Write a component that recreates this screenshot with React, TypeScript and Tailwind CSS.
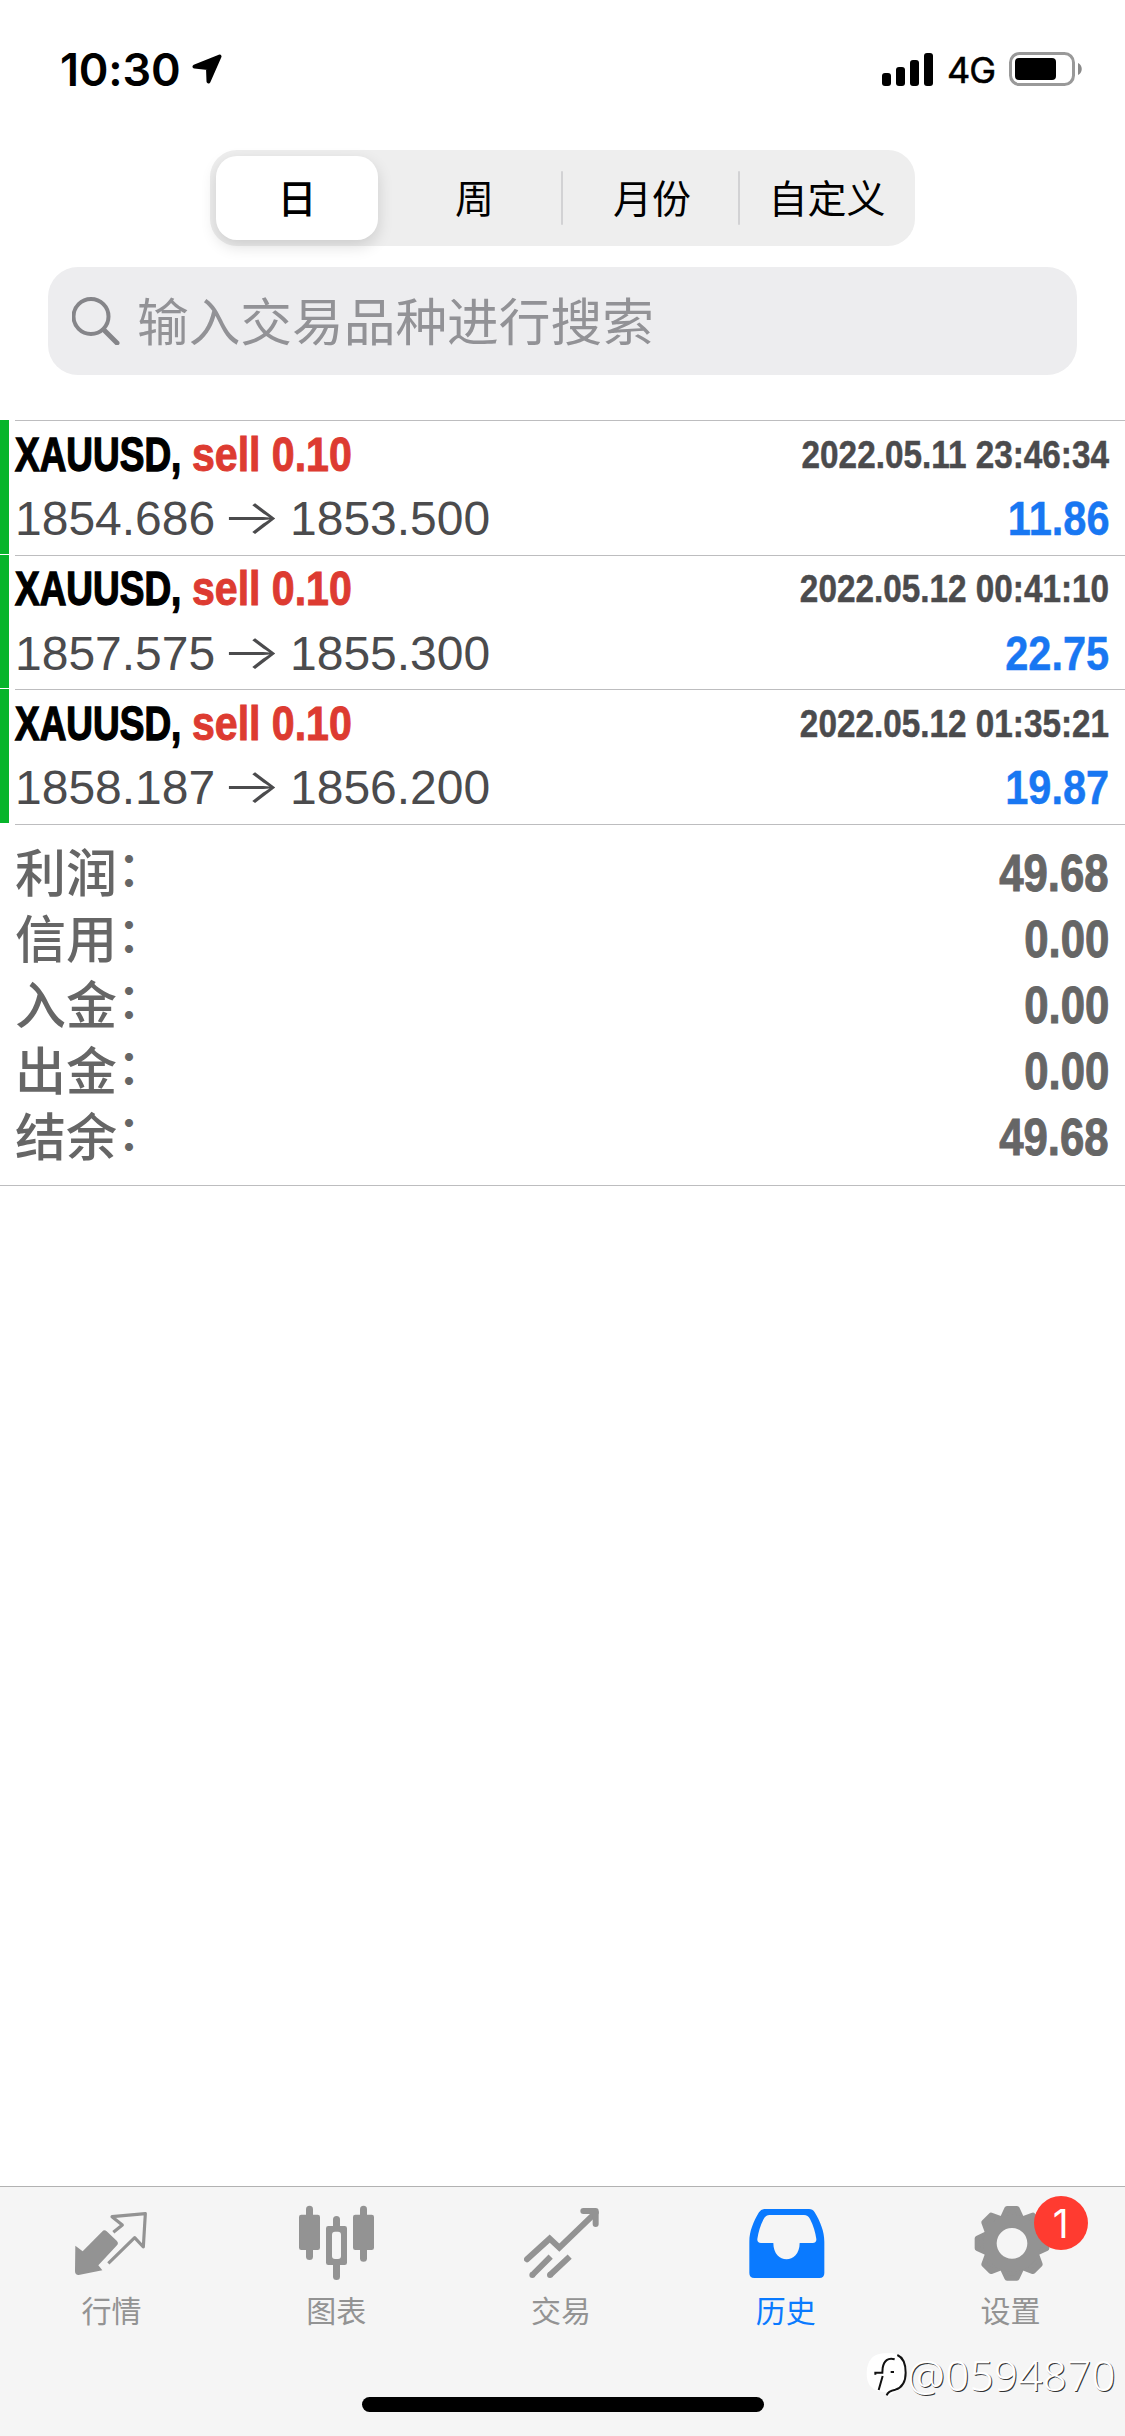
import React, { useState } from 'react';
import clsx from 'clsx';

interface Deal {
  id: number;
  symbol: string;
  side: string;
  volume: string;
  open: string;
  close: string;
  time: string;
  profit: string;
}

const deals: Deal[] = [
  { id: 1, symbol: 'XAUUSD', side: 'sell', volume: '0.10', open: '1854.686', close: '1853.500', time: '2022.05.11 23:46:34', profit: '11.86' },
  { id: 2, symbol: 'XAUUSD', side: 'sell', volume: '0.10', open: '1857.575', close: '1855.300', time: '2022.05.12 00:41:10', profit: '22.75' },
  { id: 3, symbol: 'XAUUSD', side: 'sell', volume: '0.10', open: '1858.187', close: '1856.200', time: '2022.05.12 01:35:21', profit: '19.87' },
];

const totals = [
  { label: '利润', value: '49.68' },
  { label: '信用', value: '0.00' },
  { label: '入金', value: '0.00' },
  { label: '出金', value: '0.00' },
  { label: '结余', value: '49.68' },
];

const periods = ['日', '周', '月份', '自定义'];

const StatusBar: React.FC = () => (
  <div className="flex h-[150px] items-start justify-between pl-[60px] pr-[43px] pt-[41px]">
    <div className="flex h-14 items-center">
      <span className="w-[132px] font-['Inter',sans-serif] text-[45px] font-semibold leading-none tracking-[-0.2px]">10:30</span>
      <svg width="30" height="30" viewBox="0 0 30 30">
        <path d="M2.5 12.5 27.5 2.5 16.5 27.5 16 14Z" fill="#000" stroke="#000" strokeWidth="4" strokeLinejoin="round" />
      </svg>
    </div>
    <div className="flex h-14 items-center">
      <svg width="51" height="33" viewBox="0 0 51 33">
        <rect x="0" y="20" width="9" height="13" rx="3" />
        <rect x="14" y="14" width="9" height="19" rx="3" />
        <rect x="28" y="7" width="9" height="26" rx="3" />
        <rect x="42" y="0" width="9" height="33" rx="3" />
      </svg>
      <span className="ml-[14px] w-[62px] pt-0.5 font-['Inter',sans-serif] text-[36px] leading-none tracking-[-1px] [-webkit-text-stroke:0.5px]">4G</span>
      <svg width="73" height="34" viewBox="0 0 73 34">
        <rect x="1.5" y="1.5" width="63" height="31" rx="9" fill="none" stroke="#999" strokeWidth="3" />
        <rect x="6" y="6" width="41" height="22" rx="4" />
        <path d="M69 11c5 2 5 10 0 12z" fill="#8a8a8a" />
      </svg>
    </div>
  </div>
);

const MarketIcon: React.FC = () => (
  <svg width="76" height="76" viewBox="222 105 228 228">
    <path
      d="M226 227 248 244 306 185Q313 177 320 184L350 212Q357 219 351 226L295 286 307 301 236 315Q225 315 225 304Z"
      fill="currentColor"
    />
    <path d="M340 187 367 165 336 140 436 131 430 231 404 203 325 280" fill="none" stroke="currentColor" strokeWidth="9.5" strokeLinejoin="round" />
  </svg>
);

const ChartIcon: React.FC = () => (
  <svg width="76" height="76" viewBox="897 105 228 228">
    <g fill="currentColor">
      <rect x="897" y="134" width="63" height="106" rx="7" />
      <rect x="918" y="107" width="21" height="163" rx="10.5" />
      <rect x="1059" y="134" width="63" height="106" rx="7" />
      <rect x="1080" y="107" width="21" height="168" rx="10.5" />
      <rect x="999" y="138" width="21" height="60" rx="10.5" />
      <rect x="999" y="260" width="21" height="70" rx="10.5" />
      <rect x="978" y="168" width="63" height="117" rx="7" />
    </g>
    <rect x="996" y="185" width="27" height="82" rx="9" fill="#f5f5f5" />
  </svg>
);

const TradeIcon: React.FC = () => (
  <svg width="76" height="76" viewBox="222 105 228 228">
    <g fill="none" stroke="currentColor" strokeWidth="18">
      <path d="M231 268 299 206 328 233 437 128" strokeLinejoin="miter" strokeLinecap="round" />
      <path d="M400 123H437V162" strokeLinejoin="round" strokeLinecap="round" />
      <path d="M247 315 302 260M300 315 359 260" />
      <path d="M247 315h.1M300 315h.1" strokeLinecap="round" />
    </g>
  </svg>
);

const HistoryIcon: React.FC = () => (
  <svg width="76" height="76" viewBox="896 105 228 228">
    <path
      fill="currentColor"
      fillRule="evenodd"
      d="M943 117H1076Q1087 117 1093 127C1110 155 1122 185 1122 215V309Q1122 324 1107 324H912Q897 324 897 309V215C897 185 909 155 926 127Q932 117 943 117ZM958 135Q946 135 940 147Q926 174 921 207Q920 219 932 219H969C969 284 1048 284 1048 219H1087Q1099 219 1098 207Q1093 174 1079 147Q1073 135 1061 135Z"
    />
  </svg>
);

const SettingsIcon: React.FC = () => (
  <svg width="76" height="76" viewBox="-114 -115 228 228">
    <g fill="currentColor" stroke="currentColor" strokeWidth="16" strokeLinejoin="round">
      {[0, 45, 90, 135, 180, 225, 270, 315].map((angle) => (
        <path key={angle} d="M-15 -104H15L28 -76H-28Z" transform={`rotate(${angle})`} />
      ))}
    </g>
    <circle r="66" fill="none" stroke="currentColor" strokeWidth="40" />
  </svg>
);

const tabs = [
  { label: '行情', icon: MarketIcon },
  { label: '图表', icon: ChartIcon },
  { label: '交易', icon: TradeIcon },
  { label: '历史', icon: HistoryIcon },
  { label: '设置', icon: SettingsIcon, badge: '1' },
];

const DealRow: React.FC<{ deal: Deal }> = ({ deal }) => (
  <div className="flex h-[134.67px]">
    <div className="mb-px w-[9px] shrink-0 bg-[#07b52b]" />
    <div className="ml-1.5 flex-1 border-t border-[#bdbdbf] pr-4 font-['Liberation_Sans',sans-serif] text-[48px] text-[#4b4b4d]">
      <div className="flex h-[66px] items-center justify-between pt-px leading-[66px]">
        <div className="flex font-bold">
          <span className="w-[177px] origin-left scale-x-[0.77] whitespace-nowrap text-black [-webkit-text-stroke:1.4px]">{deal.symbol},</span>
          <span className="w-[160px] origin-left scale-x-[0.855] whitespace-nowrap text-[#dd3b31] [-webkit-text-stroke:1px]">
            {deal.side} {deal.volume}
          </span>
        </div>
        <span className="origin-right scale-x-[0.854] whitespace-nowrap text-[39px] font-bold [-webkit-text-stroke:0.5px]">{deal.time}</span>
      </div>
      <div className="flex h-[63px] items-center justify-between leading-[63px]">
        <div className="flex">
          <span className="w-[206px]">{deal.open}</span>
          <span className="-mt-0.5 w-[69px] origin-left scale-x-[1.32] font-['Inter',sans-serif] font-light">→</span>
          <span>{deal.close}</span>
        </div>
        <span className="origin-right scale-x-[0.865] font-bold text-[#1877f2] [-webkit-text-stroke:0.5px]">{deal.profit}</span>
      </div>
    </div>
  </div>
);

const App: React.FC = () => {
  const [period, setPeriod] = useState('日');
  const [activeTab, setActiveTab] = useState('历史');

  return (
    <div className="flex h-[2436px] w-[1125px] flex-col overflow-hidden bg-white font-['Noto_Sans_CJK_SC',sans-serif] text-black">
      <StatusBar />

      {/* Period switch */}
      <div className="mx-auto grid h-24 w-[705px] grid-cols-[174px_175px_177px_167px] rounded-[27px] bg-[#eeeeee] p-1.5">
        {periods.map((name, i) => (
          <button
            key={name}
            onClick={() => setPeriod(name)}
            className={clsx(
              'relative flex items-center justify-center pb-[3px] text-[39px] leading-none',
              period === name ? 'mr-3 rounded-[21px] bg-white font-medium shadow-[0_6px_16px_rgba(0,0,0,0.14)]' : 'font-normal',
              i === 1 && 'pr-1.5',
              i === 2 && 'pr-[3px]',
              i === 3 && 'pl-[3px]'
            )}
          >
            {i > 1 && <span className="absolute -left-1 top-[15px] h-[54px] w-0.5 rounded bg-[#d2d2d4]" />}
            <span className="whitespace-nowrap">{name}</span>
          </button>
        ))}
      </div>

      {/* Search */}
      <div className="mx-12 mt-[21px] flex h-[108px] items-center rounded-[30px] bg-[#ededef] pl-6">
        <svg width="48" height="48" viewBox="0 0 48 48" fill="none" stroke="#858589" strokeLinecap="round">
          <circle cx="19" cy="19.5" r="17.5" strokeWidth="4" />
          <path d="M32 33 45 46" strokeWidth="5" />
        </svg>
        <span className="ml-[17px] pb-1 text-[51.7px] leading-none text-[#929296]">输入交易品种进行搜索</span>
      </div>

      {/* Deals */}
      <div className="mt-[45px]">
        {deals.map((deal) => (
          <DealRow key={deal.id} deal={deal} />
        ))}
      </div>

      {/* Totals */}
      <div className="ml-[15px] border-t border-[#bdbdbf]" />
      <div className="h-[361px] border-b border-[#bdbdbf] pl-[15px] pr-4 pt-4 text-[51px] font-medium text-[#666666]">
        {totals.map((row) => (
          <div
            key={row.label}
            className="flex h-[66px] items-center justify-between font-['Liberation_Sans','Noto_Sans_CJK_SC',sans-serif] leading-[66px]"
          >
            <div className="flex pt-0.5">
              <span>{row.label}</span>
              <span className="-mt-[5px] text-[48px]">：</span>
            </div>
            <span className="origin-right scale-x-[0.857] font-bold [-webkit-text-stroke:1px]">{row.value}</span>
          </div>
        ))}
      </div>

      {/* Tab bar */}
      <div className="relative mt-auto h-[250px] border-t border-[#b2b2b2] bg-[#f5f5f5]">
        <div className="grid w-[1124px] grid-cols-5 pt-[18px]">
          {tabs.map(({ label, icon: Icon, badge }) => (
            <button
              key={label}
              onClick={() => setActiveTab(label)}
              className={clsx('flex flex-col items-center', activeTab === label ? 'text-[#0a7aff]' : 'text-[#939393]')}
            >
              <span className="relative">
                <Icon />
                {badge && (
                  <span className="absolute -top-[9px] left-[60px] flex h-[54px] w-[54px] items-center justify-center rounded-full bg-[#ff3b30] font-['Inter',sans-serif] text-[39px] leading-none text-white">
                    {badge}
                  </span>
                )}
              </span>
              <span className="mt-[13px] pr-0.5 text-[30px] leading-[30px]">{label}</span>
            </button>
          ))}
        </div>
        <div className="absolute bottom-6 left-[362px] h-[15px] w-[402px] rounded-full bg-black" />
        {/* Author mark */}
        <div className="absolute bottom-9 right-[9px] flex h-[50px] items-center">
          <svg width="42" height="46" viewBox="0 0 126 138">
            <path d="M54 4H80Q122 12 122 62Q122 104 92 116L64 136 62 120Q0 120 2 62Q4 6 54 4Z" fill="#fff" />
            <path d="M94 9Q119 20 119 62Q119 103 88 113Q66 117 62 130" fill="none" stroke="#111" strokeWidth="6" />
            <path d="M86 22Q56 14 50 48L49 62H28V68M50 72 38 114M74 60H84" fill="none" stroke="#111" strokeWidth="6" />
          </svg>
          <span className="font-['Noto_Sans',sans-serif] text-[42px] font-light leading-none tracking-[0.4px] text-white [text-shadow:1px_1px_0_#333]">@0594870</span>
        </div>
      </div>
    </div>
  );
};

export default App;
